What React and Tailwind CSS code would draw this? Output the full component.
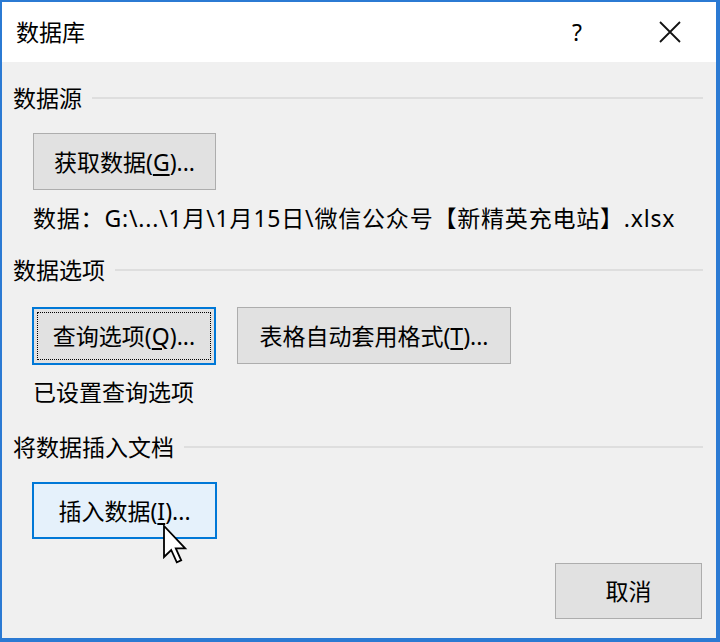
import React from 'react';

const FONT = { fontFamily: '"Noto Sans", "Noto Sans CJK SC", sans-serif' };

function SectionHeader({ title }) {
  return (
    <div className="flex items-center h-[30px] pl-[11px] pr-[13px] gap-[10px]">
      <span className="whitespace-nowrap">{title}</span>
      <div className="flex-1 h-[2px] bg-[#dedede]" />
    </div>
  );
}

function Key({ children }) {
  return <span className="underline underline-offset-[3px]">{children}</span>;
}

function Cursor() {
  return (
    <svg className="absolute left-[130px] top-[42px]" width="26" height="40" viewBox="0 0 13 20">
      <path d="M1 1 L1 16.5 L4.6 13 L7.4 19.2 L9.6 18.2 L6.9 12.2 L11.6 12.2 Z" fill="#fff" stroke="#000" strokeWidth="0.9" strokeLinejoin="miter" />
    </svg>
  );
}

export default function App() {
  return (
    <div style={FONT} className="w-[720px] h-[642px] flex flex-col border-l-2 border-t-2 border-r-[4px] border-b-[4px] border-[#2b7ad3] text-[23px] leading-[30px] text-black bg-[#f0f0f0]">
      {/* title bar */}
      <div className="h-[60px] shrink-0 bg-white flex items-center pl-[14px]">
        <span className="flex-1">数据库</span>
        <span className="w-[20px] text-center mr-[71px]">?</span>
        <svg className="mr-[34px]" width="24" height="24" viewBox="0 0 24 24">
          <path d="M2 2 L22 22 M22 2 L2 22" stroke="#111" strokeWidth="1.8" />
        </svg>
      </div>

      {/* body */}
      <div className="flex-1 flex flex-col pt-[21px]">
        <SectionHeader title="数据源" />
        <div className="pl-[31px] mt-[20px]">
          <button className="w-[183px] h-[57px] border border-[#adadad] bg-[#e1e1e1] flex items-center justify-center">
            <span>获取数据(<Key>G</Key>)...</span>
          </button>
        </div>
        <div className="pl-[31px] mt-[13px] whitespace-nowrap tracking-[0.8px]">
          数据：G:\...\1月\1月15日\微信公众号【新精英充电站】.xlsx
        </div>

        <div className="mt-[22px]">
          <SectionHeader title="数据选项" />
        </div>
        <div className="pl-[30px] mt-[22px] flex items-start gap-[21px]">
          <button className="w-[184px] h-[58px] border-2 border-[#0078d7] bg-[#e1e1e1] p-[3px]">
            <span className="w-full h-full flex items-center justify-center border border-dotted border-black">
              <span>查询选项(<Key>Q</Key>)...</span>
            </span>
          </button>
          <button className="w-[274px] h-[57px] border border-[#adadad] bg-[#e1e1e1] flex items-center justify-center">
            <span>表格自动套用格式(<Key>T</Key>)...</span>
          </button>
        </div>
        <div className="pl-[31px] mt-[12px]">已设置查询选项</div>

        <div className="mt-[25px]">
          <SectionHeader title="将数据插入文档" />
        </div>
        <div className="pl-[30px] mt-[20px]">
          <div className="relative w-[185px] h-[57px]">
            <button className="w-full h-full border-2 border-[#0078d7] bg-[#e5f1fb] flex items-center justify-center">
              <span>插入数据(<Key>I</Key>)...</span>
            </button>
            <Cursor />
          </div>
        </div>

        <div className="mt-[24px] flex justify-end pr-[14px]">
          <button className="w-[147px] h-[56px] border border-[#adadad] bg-[#e1e1e1] flex items-center justify-center">
            取消
          </button>
        </div>
      </div>
    </div>
  );
}
